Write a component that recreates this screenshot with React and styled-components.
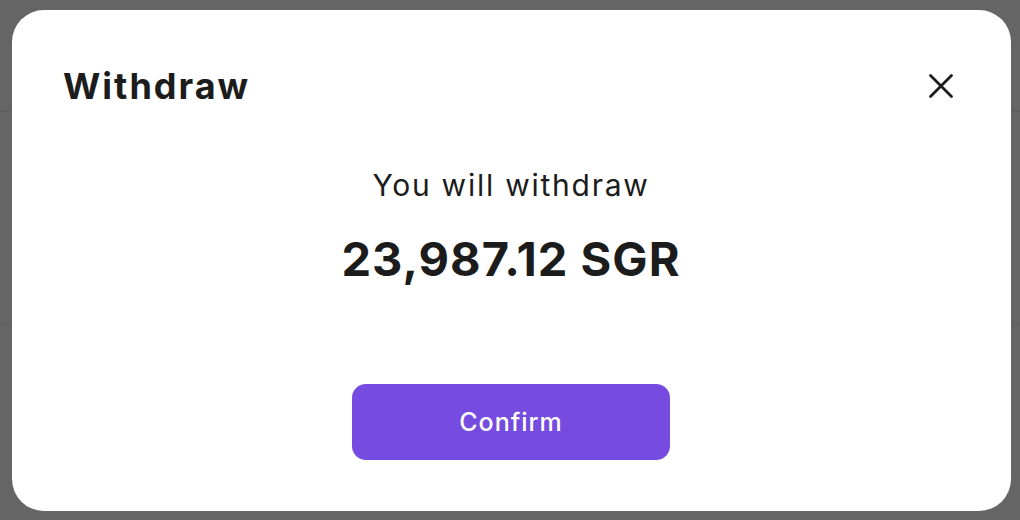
import React from "react";
import styled, { createGlobalStyle } from "styled-components";

const Global = createGlobalStyle`
  html, body { margin: 0; padding: 0; }
  body {
    width: 1020px;
    height: 520px;
    overflow: hidden;
    font-family: Inter, "Noto Sans", sans-serif;
    background: #656565;
  }
`;

const Backdrop = styled.div`
  position: relative;
  width: 1020px;
  height: 520px;
  box-sizing: border-box;
  padding: 10px 9px 9px 12px;
  background: #656565;
`;

const PageLines = styled.div`
  position: absolute;
  inset: 0;
  pointer-events: none;
  &::before, &::after {
    content: "";
    position: absolute;
    left: 0;
    right: 0;
    height: 1px;
    background: #5c5c5c;
  }
  &::before { top: 111px; }
  &::after { top: 324px; }
`;

const Modal = styled.div`
  position: relative;
  box-sizing: border-box;
  height: 100%;
  background: #ffffff;
  border-radius: 32px;
  padding: 56px 52px 0 51px;
  display: flex;
  flex-direction: column;
`;

const Header = styled.div`
  display: flex;
  align-items: center;
  justify-content: space-between;
  height: 40px;
`;

const Title = styled.h2`
  margin: 0;
  font-size: 36px;
  line-height: 40px;
  font-weight: 700;
  color: #1c1c1c;
  letter-spacing: 2px;
`;

const CloseButton = styled.button`
  border: 0;
  background: transparent;
  padding: 0;
  width: 36px;
  height: 32px;
  display: flex;
  align-items: center;
  justify-content: center;
  cursor: pointer;
  color: #1c1c1c;
`;

const Body = styled.div`
  display: flex;
  flex-direction: column;
  align-items: center;
  margin-top: 61px;
`;

const Label = styled.div`
  font-size: 30px;
  line-height: 36px;
  font-weight: 400;
  color: #1c1c1c;
  letter-spacing: 1.75px;
`;

const Amount = styled.div`
  margin-top: 28px;
  font-size: 47px;
  line-height: 56px;
  font-weight: 700;
  color: #1c1c1c;
  letter-spacing: 1px;
`;

const ConfirmButton = styled.button`
  margin-top: 97px;
  width: 318px;
  height: 76px;
  border: 0;
  border-radius: 14px;
  background: #764ce0;
  color: #ffffff;
  font-family: Inter, "Noto Sans", sans-serif;
  font-size: 25px;
  font-weight: 500;
  letter-spacing: 1px;
  cursor: pointer;
`;

const CloseIcon = () => (
  <svg width="26" height="26" viewBox="0 0 26 26" fill="none">
    <path d="M2.5 2.5 L23.5 23.5 M23.5 2.5 L2.5 23.5" stroke="currentColor" strokeWidth="2.8" strokeLinecap="round" />
  </svg>
);

export default function App() {
  return (
    <>
      <Global />
      <Backdrop>
        <PageLines />
        <Modal>
          <Header>
            <Title>Withdraw</Title>
            <CloseButton aria-label="Close">
              <CloseIcon />
            </CloseButton>
          </Header>
          <Body>
            <Label>You will withdraw</Label>
            <Amount>23,987.12 SGR</Amount>
            <ConfirmButton>Confirm</ConfirmButton>
          </Body>
        </Modal>
      </Backdrop>
    </>
  );
}
